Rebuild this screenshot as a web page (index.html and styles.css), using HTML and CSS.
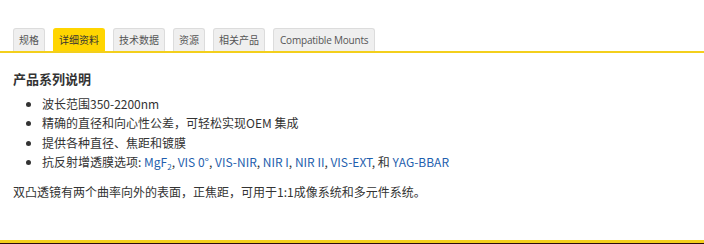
FILE: index.html
```html
<!DOCTYPE html>
<html lang="zh">
<head>
    <meta charset="UTF-8">
    <title>产品系列说明</title>
    <link rel="stylesheet" href="styles.css">
</head>
<body>
    <div class="page">
        <div class="tabs">
            <span class="tab">规格</span>
            <span class="tab active">详细资料</span>
            <span class="tab">技术数据</span>
            <span class="tab">资源</span>
            <span class="tab">相关产品</span>
            <span class="tab latin">Compatible Mounts</span>
        </div>

        <div class="content">
            <h3 class="title">产品系列说明</h3>
            <ul class="features">
                <li>波长范围350-2200nm</li>
                <li>精确的直径和向心性公差，可轻松实现OEM 集成</li>
                <li>提供各种直径、焦距和镀膜</li>
                <li>抗反射增透膜选项: <a href="#">MgF<sub>2</sub></a>, <a href="#">VIS 0°</a>, <a href="#">VIS-NIR</a>, <a href="#">NIR I</a>, <a href="#">NIR II</a>, <a href="#">VIS-EXT</a>, 和 <a href="#">YAG-BBAR</a></li>
            </ul>
            <p class="desc">双凸透镜有两个曲率向外的表面，正焦距，可用于1:1成像系统和多元件系统。</p>
        </div>

        <div class="footer-line"></div>
    </div>
</body>
</html>
```
FILE: styles.css
```css
body {
    margin: 0;
    padding: 0;
    background-color: #ffffff;
    font-family: "Noto Sans CJK SC", "Noto Sans", sans-serif;
    color: #333333;
}

.page {
    height: 244px;
    display: flex;
    flex-direction: column;
}

.tabs {
    display: flex;
    gap: 8px;
    padding: 28px 0 0 13px;
    border-bottom: 2px solid #f3cf1c;
}

.tab {
    display: inline-block;
    height: 22px;
    line-height: 22px;
    padding: 0 5px;
    font-size: 10px;
    color: #555555;
    background-color: #efefef;
    border: 1px solid #dcdcdc;
    border-bottom: none;
    border-radius: 3px 3px 0 0;
}

    .tab.active {
        background-color: #ffd500;
        border-color: #ffd500;
        color: #333333;
    }

    .tab.latin {
        font-family: "Open Sans", sans-serif;
        font-size: 10px;
        letter-spacing: -0.2px;
        padding: 0 6px;
    }

.content {
    flex: 1;
    padding: 0 13px;
}

.title {
    font-size: 13px;
    font-weight: bold;
    margin: 16px 0 6px 0;
    color: #333333;
}

.features {
    margin: 0;
    padding-left: 29px;
    font-size: 12px;
    line-height: 19.3px;
}

.features a {
    color: #1f5fae;
    text-decoration: none;
}

sub {
    font-size: 8px;
    line-height: 0;
}

.desc {
    font-size: 12px;
    margin: 12px 0 0 0;
}

.footer-line {
    height: 3px;
    background-color: #f3cf1c;
    border-bottom: 1px solid #2a0d0d;
}
```
